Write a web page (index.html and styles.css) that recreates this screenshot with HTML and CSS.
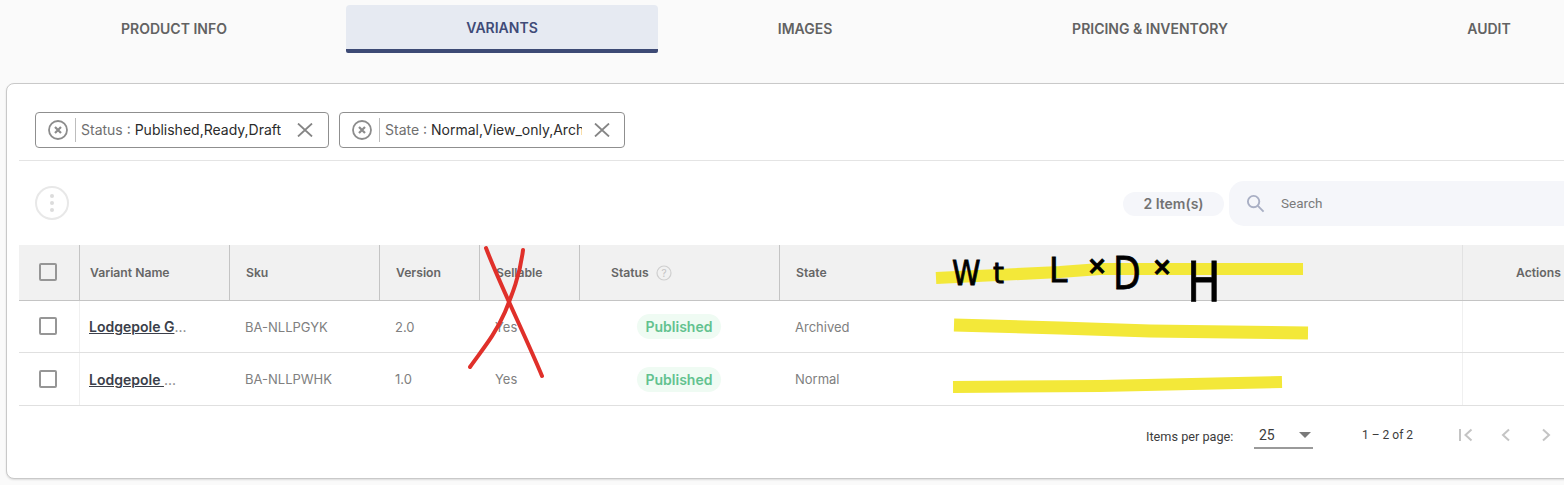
FILE: index.html
```html
<!DOCTYPE html>
<html lang="en">
<head>
<meta charset="utf-8">
<title>Variants</title>
<link rel="stylesheet" href="styles.css">
</head>
<body>
<nav class="tabs">
  <div class="tab tab-product">PRODUCT INFO</div>
  <div class="tab tab-variants active">VARIANTS</div>
  <div class="tab tab-images">IMAGES</div>
  <div class="tab tab-pricing">PRICING &amp; INVENTORY</div>
  <div class="tab tab-audit">AUDIT</div>
</nav>
<main class="card">
  <div class="chips">
    <div class="chip chip-status">
      <svg class="chip-clear" viewBox="0 0 20 20"><circle cx="10" cy="10" r="9" /><path d="M7 7l6 6M13 7l-6 6" /></svg>
      <span class="chip-text"><span class="chip-key">Status : </span>Published,Ready,Draft</span>
      <svg class="chip-x" viewBox="0 0 16 14"><path d="M1 .5l14 13M15 .5l-14 13" /></svg>
    </div>
    <div class="chip chip-state">
      <svg class="chip-clear" viewBox="0 0 20 20"><circle cx="10" cy="10" r="9" /><path d="M7 7l6 6M13 7l-6 6" /></svg>
      <span class="chip-text"><span class="chip-key">State : </span>Normal,View_only,Arch</span>
      <svg class="chip-x" viewBox="0 0 16 14"><path d="M1 .5l14 13M15 .5l-14 13" /></svg>
    </div>
  </div>
  <div class="toolbar">
    <div class="more"><i></i><i></i><i></i></div>
    <div class="count">2 Item(s)</div>
    <div class="search">
      <svg class="search-icon" viewBox="0 0 20 20"><circle cx="8" cy="8" r="6" /><path d="M12.500 12.500l6 6" /></svg>
      <span>Search</span>
    </div>
  </div>
  <div class="table">
    <div class="row head">
      <div class="cell cb"><span class="check"></span></div>
      <div class="cell cell-name">Variant Name</div>
      <div class="cell">Sku</div>
      <div class="cell">Version</div>
      <div class="cell">Sellable</div>
      <div class="cell cell-status">Status
        <svg class="help" viewBox="0 0 16 16"><circle cx="8" cy="8" r="7" /><text x="8" y="11.500" text-anchor="middle">?</text></svg>
      </div>
      <div class="cell">State</div>
      <div class="cell cell-actions">Actions</div>
    </div>
    <div class="row body-row row-one">
      <div class="cell cb"><span class="check"></span></div>
      <div class="cell cell-name"><a class="name">Lodgepole G</a><span class="dots">...</span></div>
      <div class="cell">BA-NLLPGYK</div>
      <div class="cell">2.0</div>
      <div class="cell">Yes</div>
      <div class="cell cell-pill"><span class="pill">Published</span></div>
      <div class="cell">Archived</div>
      <div class="cell cell-actions"></div>
    </div>
    <div class="row body-row row-two">
      <div class="cell cb"><span class="check"></span></div>
      <div class="cell cell-name"><a class="name">Lodgepole </a><span class="dots">...</span></div>
      <div class="cell">BA-NLLPWHK</div>
      <div class="cell">1.0</div>
      <div class="cell">Yes</div>
      <div class="cell cell-pill"><span class="pill">Published</span></div>
      <div class="cell">Normal</div>
      <div class="cell cell-actions"></div>
    </div>
  </div>
  <div class="pager">
    <span class="pager-label">Items per page:</span>
    <div class="pager-select"><span>25</span><i class="caret"></i></div>
    <span class="pager-range">1 – 2 of 2</span>
    <svg class="pager-btn first" viewBox="0 0 14 14"><path d="M1 1v12M12.500 1.500l-6 5.500 6 5.500" /></svg>
    <svg class="pager-btn prev" viewBox="0 0 10 14"><path d="M8 1.500l-6 5.500 6 5.500" /></svg>
    <svg class="pager-btn next" viewBox="0 0 10 14"><path d="M2 1.500l6 5.500-6 5.500" /></svg>
  </div>
</main>
<svg class="markup" viewBox="0 0 1564 485" aria-hidden="true">
  <path class="hl" d="M936 278L1060 272L1100 269H1303" stroke-width="12"/>
  <path class="hl" d="M954 325L1060 328L1150 331L1308 333" stroke-width="13"/>
  <path class="hl" d="M953 387L1100 386L1282 382" stroke-width="12"/>
  <path class="red" d="M486 248C500 285 525 335 542 376"/>
  <path class="red" d="M523 250C520 275 512 295 505 312C495 335 482 350 470 367"/>
  <text class="pen pen-w" transform="translate(952 285) scale(.85 1)">W</text>
  <text class="pen pen-t" x="993" y="283">t</text>
  <text class="pen pen-l" x="1049" y="282">L</text>
  <text class="pen pen-x" x="1087" y="274">×</text>
  <text class="pen pen-d" transform="translate(1113 289) scale(.8 1)">D</text>
  <text class="pen pen-x" x="1152" y="275">×</text>
  <text class="pen pen-h" transform="translate(1187 301) scale(.8 1)">H</text>
</svg>
</body>
</html>
```
FILE: styles.css
```css
* { box-sizing: border-box; }
html, body { margin: 0; height: 485px; overflow: hidden; }
body {
  position: relative;
  width: 1564px;
  padding: 5px 0 0 6px;
  background: #fafafa;
  font-family: Inter, "Liberation Sans", sans-serif;
  color: #808080;
}

/* tabs */
.tabs { display: flex; gap: 16px; width: 1700px; margin-left: 12px; height: 48px; }
.tab {
  display: flex;
  align-items: center;
  justify-content: center;
  height: 48px;
  padding-bottom: 1px;
  font-size: 14px;
  font-weight: 600;
  color: #626262;
  flex: none;
}
.tab-product, .tab-variants { width: 312px; }
.tab-images { width: 262px; }
.tab-pricing { width: 396px; }
.tab-audit { width: 250px; }
.active {
  padding: 1px 0 0;
  background: #e6eaf2;
  color: #3f4b78;
  border-radius: 4px 4px 2px 2px;
  border-bottom: 4px solid #3d4a75;
}

/* card */
.card {
  width: 1640px;
  height: 396px;
  margin-top: 30px;
  padding: 28px 12px 0;
  background: #fff;
  border: 1px solid #c9c9c9;
  border-radius: 8px;
  box-shadow: 0 1px 2px rgba(0, 0, 0, .12);
}

/* chips */
.chips {
  display: flex;
  gap: 10px;
  height: 49px;
  padding-left: 16px;
  border-bottom: 1px solid #e4e4e4;
}
.chip {
  display: flex;
  align-items: center;
  flex: none;
  height: 36px;
  border: 1px solid #8f8f8f;
  border-radius: 4px;
  background: #fff;
}
.chip-status { width: 294px; }
.chip-state { width: 286px; }
.chip-clear {
  flex: none;
  width: 20px;
  height: 20px;
  margin-left: 12px;
  fill: none;
  stroke: #8c8c8c;
  stroke-width: 1.800;
}
.chip-clear path { stroke-width: 2.200; }
.chip-text {
  flex: none;
  height: 24px;
  margin-left: 7px;
  padding-left: 5px;
  border-left: 1px solid #bdbdbd;
  font-size: 14px;
  line-height: 24px;
  color: #2b2b2b;
  white-space: nowrap;
  overflow: hidden;
}
.chip-status .chip-text { width: 206px; }
.chip-state .chip-text { width: 203px; }
.chip-key { color: #6f6f6f; }
.chip-x {
  flex: none;
  width: 16px;
  height: 14px;
  margin-left: 16px;
  fill: none;
  stroke: #858585;
  stroke-width: 1.800;
}
.chip-state .chip-x { margin-left: 12px; }

/* toolbar */
.toolbar {
  display: flex;
  align-items: center;
  height: 45px;
  margin-top: 20px;
  padding-left: 16px;
}
.more {
  display: flex;
  flex-direction: column;
  align-items: center;
  justify-content: center;
  flex: none;
  gap: 3px;
  width: 34px;
  height: 34px;
  margin-top: -1px;
  border: 2px solid #e8e8e8;
  border-radius: 50%;
}
.more i { width: 4px; height: 4px; border-radius: 50%; background: #dcdcdc; }
.count {
  flex: none;
  width: 101px;
  height: 24px;
  margin-left: 1054px;
  border-radius: 12px;
  background: #f5f6fa;
  font-size: 14px;
  font-weight: 600;
  line-height: 24px;
  text-align: center;
  color: #737373;
}
.search {
  display: flex;
  align-items: center;
  flex: none;
  width: 420px;
  height: 45px;
  margin-left: 5px;
  padding: 0 0 1px 17px;
  border-radius: 15px;
  background: #f5f6fa;
  font-family: Roboto, sans-serif;
  font-size: 13.500px;
  color: #7b7b7b;
}
.search-icon {
  width: 19px;
  height: 19px;
  margin-right: 16px;
  fill: none;
  stroke: #a9afc4;
  stroke-width: 2;
}

/* table */
.table { margin-top: 19px; font-size: 13px; }
.row {
  display: grid;
  grid-template-columns: 60px 150px 150px 100px 100px 200px 683px 200px;
  align-items: stretch;
  border-bottom: 1px solid #e0e0e0;
}
.head {
  height: 56px;
  background: #f1f1f1;
  border-bottom: 1px solid #c4c4c4;
  font-size: 12.200px;
  font-weight: 600;
  color: #666;
}
.row-one { height: 52px; }
.row-two { height: 53px; }
.cell {
  display: flex;
  align-items: center;
  padding-left: 16px;
  white-space: nowrap;
}
.head .cell { border-left: 1px solid #c4c4c4; }
.head .cb { border-left: 0; }
.body-row .cell-name { padding-left: 9px; border-left: 1px solid #f0f0f0; }
.head .cell-name { padding-left: 10px; }
.head .cell-status { padding-left: 31px; }
.head .cell-actions { padding-left: 53px; border-left-color: #e2e2e2; }
.body-row .cell-actions { border-left: 1px solid #f0f0f0; }
.cell.cb { justify-content: center; padding-left: 0; padding-right: 2px; padding-bottom: 1px; }
.check {
  width: 18px;
  height: 18px;
  border: 2px solid #969696;
  border-radius: 2px;
  background: #fff;
}
.head .check { background: transparent; }
.name { font-size: 14px; font-weight: 600; color: #3b3f4a; text-decoration: underline; white-space: pre; }
.dots { color: #808080; font-size: 14px; }
.help {
  flex: none;
  width: 16px;
  height: 16px;
  margin-left: 7px;
  fill: none;
  stroke: #cfcfcf;
  stroke-width: 1.200;
}
.help text {
  fill: #c4c4c4;
  stroke: none;
  font-size: 10px;
  font-weight: 400;
}
.cell-pill { padding-left: 58px; }
.pill {
  width: 84px;
  height: 25px;
  border-radius: 13px;
  background: #effbf3;
  font-size: 14px;
  font-weight: 600;
  line-height: 25px;
  text-align: center;
  color: #62c28f;
}

/* pager */
.pager {
  display: flex;
  align-items: center;
  height: 24px;
  margin-top: 17px;
  padding-left: 1127px;
  font-family: Roboto, sans-serif;
  font-size: 12.700px;
  color: #3c3c3c;
}
.pager-label { flex: none; width: 108px; padding-top: 3px; }
.pager-select {
  display: flex;
  align-items: center;
  justify-content: space-between;
  flex: none;
  width: 59px;
  height: 26px;
  margin-top: 2px;
  padding: 0 2px 0 5px;
  border-bottom: 2px solid #9a9a9a;
  font-size: 14px;
}
.caret {
  width: 0;
  height: 0;
  border-left: 6px solid transparent;
  border-right: 6px solid transparent;
  border-top: 6px solid #7a7a7a;
}
.pager-range { flex: none; width: 97px; margin-left: 49px; font-size: 12px; }
.pager-btn {
  height: 14px;
  fill: none;
  stroke: #c4c4c4;
  stroke-width: 2;
  flex: none;
}
.first { width: 14px; margin-right: 28px; }
.prev { width: 10px; margin-right: 30px; }
.next { width: 10px; }

/* hand-drawn markup layered over the screenshot */
.markup {
  position: absolute;
  left: 0;
  top: 0;
  width: 1564px;
  height: 485px;
  pointer-events: none;
}
.hl { fill: none; stroke: #f3e839; }
.red { fill: none; stroke: #e0302a; stroke-width: 4; stroke-linecap: round; }
.pen {
  font-family: "DejaVu Sans", sans-serif;
  font-weight: 400;
  fill: #000;
  stroke: #000;
  stroke-width: .8;
}
.pen-w { font-size: 34px; }
.pen-t { font-size: 28px; }
.pen-l { font-size: 33px; }
.pen-x { font-size: 24px; font-weight: 700; }
.pen-d { font-size: 45px; }
.pen-h { font-size: 56px; }
```
